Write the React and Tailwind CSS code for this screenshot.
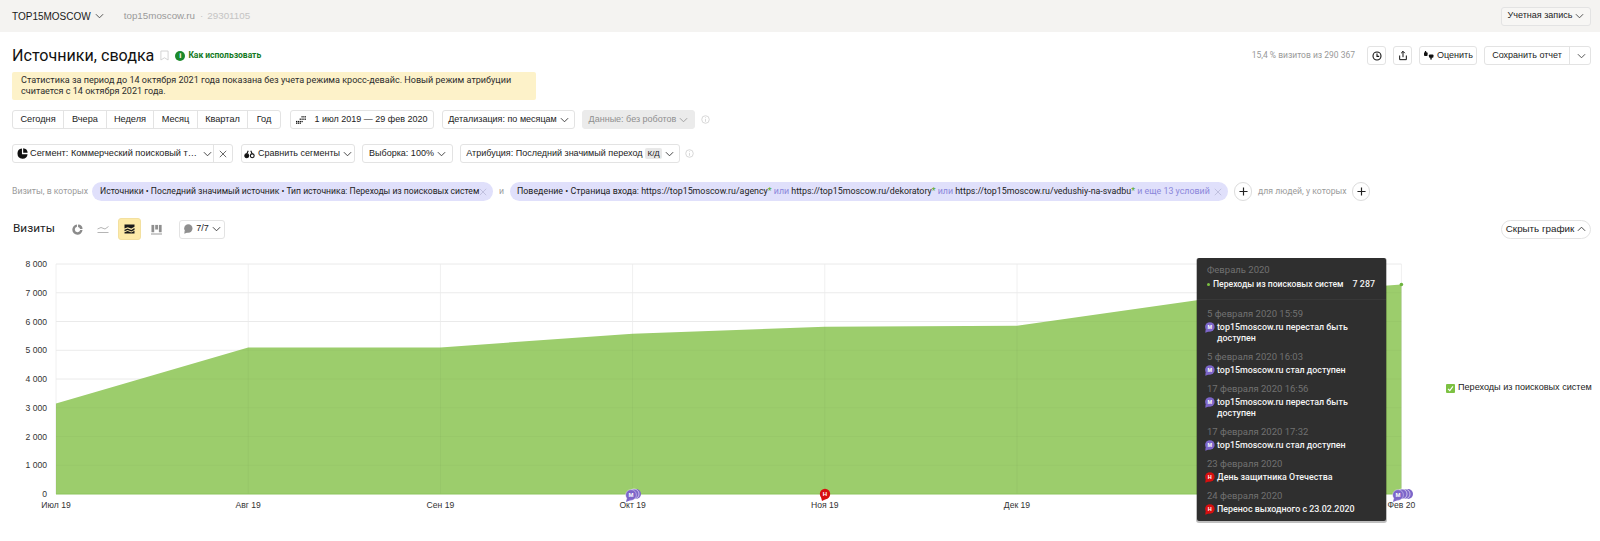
import React from "react";

const sans = "font-['Liberation_Sans',Arial,sans-serif]";
const ya = "font-['Roboto','Liberation_Sans',sans-serif]";

function Chev({ className = "", up = false }) {
  return (
    <svg viewBox="0 0 10 6" className={`w-[9px] h-[6px] shrink-0 ${className}`} fill="none" stroke="currentColor" strokeWidth="1">
      <path d={up ? "M1 5 L5 1 L9 5" : "M1 1 L5 5 L9 1"} />
    </svg>
  );
}

function Btn({ className = "", children }) {
  return (
    <div className={`h-[19px] flex items-center justify-center gap-[3px] bg-white border border-[#e3e3e3] rounded-[3px] text-[9px] text-[#222] whitespace-nowrap shrink-0 ${className}`}>
      {children}
    </div>
  );
}

function Help() {
  return (
    <svg viewBox="0 0 10 10" className="w-[9px] h-[9px] shrink-0 text-[#cfcfcf]" fill="none" stroke="currentColor" strokeWidth="0.9">
      <circle cx="5" cy="5" r="4.2" />
      <path d="M5 4.5V7.5M5 2.6V3.5" />
    </svg>
  );
}

function X({ className = "" }) {
  return (
    <svg viewBox="0 0 10 10" className={`w-[8px] h-[8px] shrink-0 ${className}`} fill="none" stroke="currentColor" strokeWidth="1">
      <path d="M1 1L9 9M9 1L1 9" />
    </svg>
  );
}

function Plus() {
  return (
    <div className="w-[18px] h-[19px] rounded-full bg-white border border-[#dcdcdc] flex items-center justify-center shrink-0">
      <svg viewBox="0 0 10 10" className="w-[9px] h-[9px] text-[#222]" fill="none" stroke="currentColor" strokeWidth="1.3">
        <path d="M5 0.5V9.5M0.5 5H9.5" />
      </svg>
    </div>
  );
}

function Bubble({ color, letter }) {
  return (
    <svg viewBox="0 0 12 12" className="w-[11px] h-[11px] shrink-0">
      <circle cx="6.4" cy="5.4" r="5.2" fill={color} />
      <path d="M1.8 8 L1.4 11.8 L6 10.2 Z" fill={color} />
      <text x="6.4" y="7.6" textAnchor="middle" fontSize="6" fontWeight="700" fill="#fff" fontFamily="Liberation Sans">{letter}</text>
    </svg>
  );
}

const PURPLE = "#7d66c9";
const RED = "#d80f0f";

function Event({ date, letter, lines }) {
  return (
    <div className="flex flex-col">
      <div className="text-[9.5px] leading-[11px] text-[#717171] pl-[2px]">{date}</div>
      <div className="flex items-start gap-[2px] mt-[3px] -ml-[1px]">
        <Bubble color={letter === "М" ? PURPLE : RED} letter={letter} />
        <div className="text-[#f4f4f4] text-[8.9px] leading-[11px] font-medium">
          {lines.map((l) => <div key={l}>{l}</div>)}
        </div>
      </div>
    </div>
  );
}

function Tooltip() {
  return (
    <div className={`absolute left-[1197px] top-[8px] w-[189px] h-[263px] bg-[#2f2f2f] rounded-[2px] shadow-[0_1px_0_1px_rgba(0,0,0,0.25)] ${ya}`}>
      <div className="h-[42px] border-b border-[#383838] pt-[6px] pl-[10px] pr-[11px]">
        <div className="text-[9.5px] leading-[11px] text-[#717171]">Февраль 2020</div>
        <div className="flex items-center justify-between mt-[4px] text-[#f4f4f4] leading-[11px] font-medium whitespace-nowrap">
          <span className="flex items-center gap-[3px] text-[8.6px]">
            <span className="w-[3px] h-[3px] rounded-full bg-[#7cc142]" />
            Переходы из поисковых систем
          </span>
          <span className="text-[8.9px]">7 287</span>
        </div>
      </div>
      <div className="flex flex-col gap-[7px] pl-[8px] pt-[8px]">
        <Event date="5 февраля 2020 15:59" letter="М" lines={["top15moscow.ru перестал быть", "доступен"]} />
        <Event date="5 февраля 2020 16:03" letter="М" lines={["top15moscow.ru стал доступен"]} />
        <Event date="17 февраля 2020 16:56" letter="М" lines={["top15moscow.ru перестал быть", "доступен"]} />
        <Event date="17 февраля 2020 17:32" letter="М" lines={["top15moscow.ru стал доступен"]} />
        <Event date="23 февраля 2020" letter="Н" lines={["День защитника Отечества"]} />
        <Event date="24 февраля 2020" letter="Н" lines={["Перенос выходного с 23.02.2020"]} />
      </div>
    </div>
  );
}

const X0 = 56;
const STEP = 192.2;
const BOT = 244;
const vals = [3150, 5100, 5100, 5570, 5820, 5850, 6800, 7287];
const months = ["Июл 19", "Авг 19", "Сен 19", "Окт 19", "Ноя 19", "Дек 19", "", "Фев 20"];
const yOf = (v) => BOT - (v / 8000) * 230;
const xOf = (i) => X0 + i * STEP;

function Chart() {
  const pts = vals.map((v, i) => `${xOf(i)},${yOf(v)}`).join(" ");
  const gridY = [1000, 2000, 3000, 4000, 5000, 6000, 7000, 8000];
  return (
    <svg viewBox="0 0 1420 291" className="w-[1420px] h-[291px] shrink-0 block">
      {gridY.map((v) => (
        <line key={v} x1={X0} x2={xOf(7)} y1={yOf(v)} y2={yOf(v)} stroke="#f0f0f0" strokeWidth="1" />
      ))}
      {months.map((m, i) => (
        <line key={i} x1={xOf(i)} x2={xOf(i)} y1={14} y2={BOT} stroke="#f0f0f0" strokeWidth="1" />
      ))}
      <polygon points={`${X0},${BOT} ${pts} ${xOf(7)},${BOT}`} fill="#9ccd6c" />
      {gridY.map((v) => (
        <line key={v} x1={X0} x2={xOf(7)} y1={yOf(v)} y2={yOf(v)} stroke="#000" strokeOpacity="0.025" strokeWidth="1" />
      ))}
      {months.map((m, i) => (
        <line key={i} x1={xOf(i)} x2={xOf(i)} y1={yOf(vals[i])} y2={BOT} stroke="#000" strokeOpacity="0.03" strokeWidth="1" />
      ))}
      <line x1={X0} x2={xOf(7)} y1={BOT} y2={BOT} stroke="#8cc45c" strokeWidth="1" />
      <circle cx={xOf(7)} cy={yOf(7287)} r="1.8" fill="#6db33f" />
      {[0, 1000, 2000, 3000, 4000, 5000, 6000, 7000, 8000].map((v) => (
        <text key={v} x="47" y={yOf(v) + 3} textAnchor="end" fontSize="8.6" fill="#333" fontFamily="Liberation Sans">
          {v === 0 ? "0" : `${v / 1000} 000`}
        </text>
      ))}
      {months.map((m, i) => m && (
        <text key={i} x={xOf(i)} y="258" textAnchor="middle" fontSize="8.6" fill="#333" fontFamily="Liberation Sans">{m}</text>
      ))}
      <g>
        <circle cx="636" cy="244" r="5" fill="#7d66c9" />
        <circle cx="634" cy="244" r="5" fill="#7d66c9" stroke="#fff" strokeWidth="0.6" />
        <circle cx="631" cy="245" r="5.4" fill="#7d66c9" stroke="#fff" strokeWidth="0.4" />
        <path d="M627 248 L626 252 L631 250 Z" fill="#7d66c9" />
        <text x="631" y="247" textAnchor="middle" fontSize="6" fontWeight="700" fill="#fff" fontFamily="Liberation Sans">М</text>
      </g>
      <g>
        <circle cx="825" cy="244" r="5.2" fill="#d80f0f" />
        <path d="M821 247 L822 251 L826 249 Z" fill="#d80f0f" />
        <text x="825" y="246" textAnchor="middle" fontSize="6" fontWeight="700" fill="#fff" fontFamily="Liberation Sans">Н</text>
      </g>
      <g>
        <circle cx="1408" cy="244" r="5" fill="#7d66c9" />
        <circle cx="1405" cy="244" r="5" fill="#7d66c9" stroke="#fff" strokeWidth="0.6" />
        <circle cx="1402" cy="244" r="5" fill="#7d66c9" stroke="#fff" strokeWidth="0.6" />
        <circle cx="1398" cy="245" r="5.4" fill="#7d66c9" stroke="#fff" strokeWidth="0.4" />
        <path d="M1394 248 L1393 252 L1398 250 Z" fill="#7d66c9" />
        <text x="1398" y="247" textAnchor="middle" fontSize="6" fontWeight="700" fill="#fff" fontFamily="Liberation Sans">М</text>
      </g>
    </svg>
  );
}

function Seg({ children, className = "" }) {
  return <div className={`h-full flex items-center justify-center border-r border-[#e3e3e3] last:border-r-0 ${className}`}>{children}</div>;
}

const Or = () => <span className="text-[#8b86da]"> или </span>;
const Star = () => <span className="text-[#56a82c]">*</span>;

export default function App() {
  return (
    <div className={`w-[1600px] h-[541px] overflow-hidden bg-white relative ${sans}`}>
      <header className="h-[32px] bg-[#f4f3f1] flex items-center pl-[12px] pr-[9px]">
        <span className="text-[10px] text-[#1a1a1a]">TOP15MOSCOW</span>
        <Chev className="ml-[4px] text-[#444]" />
        <span className="ml-[20px] text-[9.8px] text-[#9a9a9a]">top15moscow.ru</span>
        <span className="ml-[5px] text-[9.8px] text-[#c4c4c4]">·</span>
        <span className="ml-[4px] text-[9.8px] text-[#c4c4c4]">29301105</span>
        <Btn className="ml-auto w-[90px] !bg-[#f7f6f4]">Учетная запись <Chev className="text-[#444]" /></Btn>
      </header>

      <section className="h-[19px] mt-[14px] flex items-center pl-[12px] pr-[9px]">
        <h1 className={`text-[16.1px] leading-[19px] text-[#111] ${ya}`}>Источники, сводка</h1>
        <svg viewBox="0 0 10 12" className="w-[9px] h-[11px] ml-[6px] text-[#cfcfcf] shrink-0" fill="none" stroke="currentColor" strokeWidth="1">
          <path d="M1 1H9V11L5 8.5L1 11Z" />
        </svg>
        <span className="ml-[6px] w-[10px] h-[10px] rounded-full bg-[#1c8a2c] text-white text-[8px] font-bold leading-[10px] text-center">i</span>
        <span className={`ml-[3px] text-[8.5px] font-bold text-[#157a24] ${ya}`}>Как использовать</span>
        <span className={`ml-auto text-[8.5px] text-[#999] ${ya}`}>15,4 % визитов из 290 367</span>
        <Btn className="ml-[12px] w-[19px]">
          <svg viewBox="0 0 12 12" className="w-[10px] h-[10px]" fill="none" stroke="#111" strokeWidth="1.3">
            <circle cx="6" cy="6" r="4.8" />
            <path d="M6 3V6.4H8.6" />
          </svg>
        </Btn>
        <Btn className="ml-[7px] w-[19px]">
          <svg viewBox="0 0 12 12" className="w-[10px] h-[11px]" fill="none" stroke="#111" strokeWidth="1.2">
            <path d="M2 6V11H10V6M6 8V1M3.8 3.2L6 1L8.2 3.2" />
          </svg>
        </Btn>
        <Btn className="ml-[7px] w-[58px]">
          <svg viewBox="0 0 12 10" className="w-[11px] h-[9px] shrink-0" fill="#111">
            <rect x="1" y="1.5" width="4" height="4" rx="1" />
            <rect x="2" y="0" width="1.4" height="2.5" />
            <rect x="6.5" y="3.8" width="5" height="3.6" rx="1" />
            <rect x="8" y="6.5" width="1.6" height="3" />
          </svg>
          Оценить
        </Btn>
        <Btn className="ml-[7px] w-[107px] !justify-start">
          <span className="w-[85px] text-center border-r border-[#e3e3e3] leading-[17px]">Сохранить отчет</span>
          <Chev className="ml-[4px] text-[#444]" />
        </Btn>
      </section>

      <div className={`mt-[7px] ml-[12px] w-[524px] h-[28px] bg-[#fdf2c9] rounded-[2px] pl-[9px] pt-[3px] text-[9.05px] leading-[11px] text-[#2c2c2c] ${ya}`}>
        Статистика за период до 14 октября 2021 года показана без учета режима кросс-девайс. Новый режим атрибуции
        <br />
        считается с 14 октября 2021 года.
      </div>

      <section className="mt-[10px] h-[19px] flex items-center pl-[12px]">
        <div className="h-[19px] flex border border-[#e3e3e3] rounded-[3px] text-[9.2px] text-[#222] w-[269px]">
          <Seg className="w-[51px]">Сегодня</Seg>
          <Seg className="w-[43px]">Вчера</Seg>
          <Seg className="w-[47px]">Неделя</Seg>
          <Seg className="w-[44px]">Месяц</Seg>
          <Seg className="w-[50px]">Квартал</Seg>
          <Seg className="w-[32px]">Год</Seg>
        </div>
        <Btn className="ml-[9px] w-[144px] gap-[8px]">
          <svg viewBox="0 0 11 8.4" className="w-[10px] h-[8px] shrink-0" fill="#111">
            {[[6,0],[8,0],[10,0],[4,2.6],[6,2.6],[8,2.6],[10,2.6],[0,5.2],[2,5.2],[4,5.2],[6,5.2],[0,7],[2,7],[4,7]].map(([x,y]) => (
              <rect key={`${x}-${y}`} x={x} y={y} width="1.4" height="1.4" />
            ))}
          </svg>
          1 июл 2019 — 29 фев 2020
        </Btn>
        <Btn className="ml-[8px] w-[133px]">Детализация: по месяцам <Chev className="text-[#333]" /></Btn>
        <Btn className="ml-[7px] w-[113px] !bg-[#ebebeb] !border-[#ebebeb] !text-[#8f8f8f]">Данные: без роботов <Chev className="text-[#999]" /></Btn>
        <span className="ml-[6px] flex"><Help /></span>
      </section>

      <section className="mt-[15px] h-[19px] flex items-center pl-[12px]">
        <div className="h-[19px] w-[221px] flex border border-[#e3e3e3] rounded-[3px] text-[9.2px] text-[#222] whitespace-nowrap">
          <div className="w-[201px] flex items-center pl-[4px] border-r border-[#e3e3e3]">
            <svg viewBox="0 0 10 10" className="w-[11px] h-[11px] mr-[2px] shrink-0" fill="#111">
              <path d="M4.5 0.5A4.6 4.6 0 1 0 9.6 5.6H4.5Z" />
              <path d="M5.6 0.3A4.4 4.4 0 0 1 9.7 4.4H5.6Z" />
            </svg>
            Сегмент: Коммерческий поисковый т…
            <Chev className="ml-[6px] text-[#333]" />
          </div>
          <div className="flex-1 flex items-center justify-center text-[#444]"><X /></div>
        </div>
        <Btn className="ml-[8px] w-[114px] gap-[1px]">
          <svg viewBox="0 0 12 10" className="w-[11px] h-[10px] shrink-0" fill="none" stroke="#111" strokeWidth="1.2">
            <circle cx="3" cy="7" r="2.1" fill="#111" />
            <circle cx="9" cy="7" r="2.1" />
            <path d="M3 5L4.6 1.5M9 5L7.4 1.5" />
          </svg>
          Сравнить сегменты <Chev className="text-[#333]" />
        </Btn>
        <Btn className="ml-[7px] w-[91px]">Выборка: 100% <Chev className="text-[#333]" /></Btn>
        <Btn className="ml-[7px] w-[220px]">
          Атрибуция: Последний значимый переход
          <span className="bg-[#e8e8e8] rounded-[2px] px-[2px] text-[8px] leading-[11px]">К/Д</span>
          <Chev className="text-[#333]" />
        </Btn>
        <span className="ml-[5px] flex"><Help /></span>
      </section>

      <section className={`mt-[19px] h-[19px] flex items-center pl-[12px] text-[8.7px] text-[#222] whitespace-nowrap ${ya}`}>
        <span className="text-[#9b9b9b] w-[80px]">Визиты, в которых</span>
        <div className="h-[19px] w-[401px] rounded-full bg-[#e0e0fb] flex items-center pl-[8px] justify-between pr-[6px] text-[8.6px]">
          <span>Источники • Последний значимый источник • Тип источника: Переходы из поисковых систем</span>
          <X className="text-[#b8b8d8]" />
        </div>
        <span className="text-[#9b9b9b] w-[17px] text-center">и</span>
        <div className="h-[19px] w-[718px] rounded-full bg-[#e0e0fb] flex items-center pl-[7px] justify-between pr-[6px] text-[8.85px]">
          <span>
            Поведение • Страница входа: https://top15moscow.ru/agency<Star /><Or />https://top15moscow.ru/dekoratory<Star /><Or />https://top15moscow.ru/vedushiy-na-svadbu<Star />
            <span className="text-[#8b86da]"> и еще 13 условий</span>
          </span>
          <X className="text-[#b8b8d8]" />
        </div>
        <span className="ml-[6px]"><Plus /></span>
        <span className="ml-[6px] text-[#9b9b9b] w-[94px]">для людей, у которых</span>
        <Plus />
      </section>

      <section className="mt-[17px] h-[22px] flex items-center pl-[13px] pr-[9px]">
        <h2 className={`text-[11.8px] text-[#222] w-[58px] ${ya}`}>Визиты</h2>
        <svg viewBox="0 0 12 12" className="w-[11px] h-[11px] ml-[1px] shrink-0" fill="#8b8b8b">
          <path d="M5.4 0.5V3A3 3 0 1 0 9 6.6H11.5A5.6 5.6 0 1 1 5.4 0.5Z" />
          <path d="M6.6 0.5A5 5 0 0 1 11.5 5.4H8.8A2.8 2.8 0 0 0 6.6 3.2Z" />
        </svg>
        <svg viewBox="0 0 12 10" className="w-[12px] h-[10px] ml-[14px] shrink-0" fill="none" stroke="#b5b5b5" strokeWidth="1">
          <path d="M0.5 5L4 3.5L8 5L11.5 2.5M0.5 8.5H11.5" />
        </svg>
        <div className="w-[23px] h-[22px] ml-[9px] bg-[#fdeaa8] border border-[#f3e0a0] rounded-[3px] flex items-center justify-center">
          <svg viewBox="0 0 12 11" className="w-[11px] h-[10px]" fill="#1a1a1a">
            <path d="M0.5 0.5H11.5V3L8 5L4 3.5L0.5 5Z" />
            <path d="M0.5 6.4L4 5L8 6.5L11.5 4.5V6.5L8 8.3L4 6.7L0.5 8Z" />
            <path d="M0.5 9L4 7.8L8 9.3L11.5 7.5V10.5H0.5Z" />
          </svg>
        </div>
        <svg viewBox="0 0 12 12" className="w-[11px] h-[11px] ml-[10px] shrink-0" fill="#8f8f8f">
          <rect x="0.5" y="1" width="3" height="8" />
          <rect x="4.6" y="1" width="3" height="5" />
          <rect x="8.6" y="1" width="3" height="8" />
          <rect x="0" y="10.4" width="12" height="1" />
        </svg>
        <Btn className="ml-[17px] w-[46px] gap-[3px]">
          <svg viewBox="0 0 12 12" className="w-[10px] h-[10px] shrink-0" fill="#8f8f8f">
            <circle cx="6.4" cy="5.4" r="5" />
            <path d="M2 8L1.6 11.6L6 10Z" />
          </svg>
          7/7 <Chev className="text-[#333]" />
        </Btn>
        <div className="ml-auto w-[90px] h-[19px] rounded-full border border-[#e3e3e3] flex items-center justify-center gap-[3px] text-[9.8px] text-[#222]">
          Скрыть график <Chev up className="text-[#333]" />
        </div>
      </section>

      <section className="relative mt-[10px] flex">
        <Chart />
        <div className="ml-[26px] mt-[133px] h-[10px] flex items-center gap-[3px] text-[9.1px] text-[#222] whitespace-nowrap">
          <span className="w-[9px] h-[9px] rounded-[1px] bg-[#7cc142] flex items-center justify-center">
            <svg viewBox="0 0 10 10" className="w-[7px] h-[7px]" fill="none" stroke="#fff" strokeWidth="1.6">
              <path d="M1.5 5.5L4 8L8.5 2" />
            </svg>
          </span>
          Переходы из поисковых систем
        </div>
        <Tooltip />
      </section>
    </div>
  );
}
